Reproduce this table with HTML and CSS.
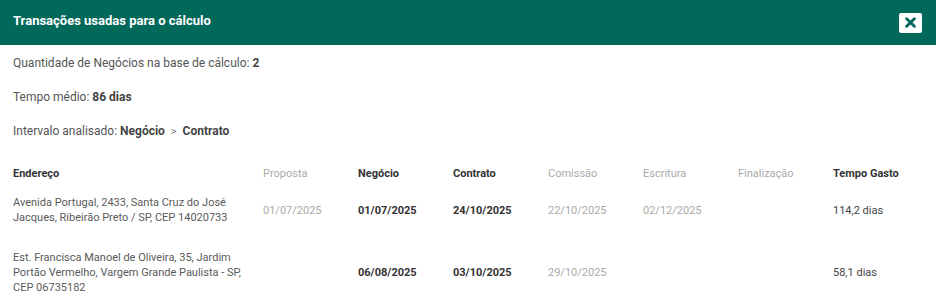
FILE: index.html
```html
<!DOCTYPE html>
<html lang="pt-BR">
<head>
<meta charset="utf-8">
<link rel="stylesheet" href="styles.css">
</head>
<body>
<div class="modal">
  <header class="modal-header">
    <h1 class="modal-title">Transações usadas para o cálculo</h1>
    <button class="close-btn" aria-label="Fechar">
      <svg width="11" height="11" viewBox="0 0 10 10"><path d="M1.5 1.5 L8.5 8.5 M8.5 1.5 L1.5 8.5" stroke="#00695a" stroke-width="2.6" stroke-linecap="round"/></svg>
    </button>
  </header>
  <div class="modal-body">
    <p class="info">Quantidade de Negócios na base de cálculo: <b>2</b></p>
    <p class="info">Tempo médio: <b>86 dias</b></p>
    <p class="info">Intervalo analisado: <b>Negócio</b> <span class="arrow">&gt;</span> <b>Contrato</b></p>
    <table class="tx-table">
      <thead>
        <tr>
          <th class="addr">Endereço</th>
          <th class="muted">Proposta</th>
          <th>Negócio</th>
          <th>Contrato</th>
          <th class="muted">Comissão</th>
          <th class="muted">Escritura</th>
          <th class="muted">Finalização</th>
          <th>Tempo Gasto</th>
        </tr>
      </thead>
      <tbody>
        <tr>
          <td class="addr">Avenida Portugal, 2433, Santa Cruz do José Jacques, Ribeirão Preto / SP, CEP 14020733</td>
          <td class="muted">01/07/2025</td>
          <td class="strong">01/07/2025</td>
          <td class="strong">24/10/2025</td>
          <td class="muted">22/10/2025</td>
          <td class="muted">02/12/2025</td>
          <td class="muted"></td>
          <td class="plain">114,2 dias</td>
        </tr>
        <tr>
          <td class="addr">Est. Francisca Manoel de Oliveira, 35, Jardim Portão Vermelho, Vargem Grande Paulista - SP, CEP 06735182</td>
          <td class="muted"></td>
          <td class="strong">06/08/2025</td>
          <td class="strong">03/10/2025</td>
          <td class="muted">29/10/2025</td>
          <td class="muted"></td>
          <td class="muted"></td>
          <td class="plain">58,1 dias</td>
        </tr>
      </tbody>
    </table>
  </div>
</div>
</body>
</html>
```
FILE: styles.css
```css
* { box-sizing: border-box; }
html, body { margin: 0; padding: 0; background: #fff; }
body { font-family: Roboto, "Noto Sans", sans-serif; color: #555; font-size: 12px; }

.modal { width: 936px; }

.modal-header {
  height: 45px;
  background: #00695a;
  display: flex;
  align-items: center;
  justify-content: space-between;
  padding: 0 14px 0 13px;
}
.modal-title {
  margin: 0;
  color: #fff;
  font-size: 13px;
  font-weight: 700;
  letter-spacing: 0;
  margin-top: -4px;
}
.close-btn {
  width: 23px;
  height: 20px;
  border: 0;
  border-radius: 2px;
  background: #fff;
  display: flex;
  align-items: center;
  justify-content: center;
  padding: 0;
  margin-top: 0;
}

.modal-body { padding: 11px 13px 0 13px; }

.info {
  margin: 0 0 20px 0;
  line-height: 14px;
  color: #555;
}
.info b { color: #444; font-weight: 700; }
.arrow { color: #777; margin: 0 3px; font-size: 11px; }

.tx-table {
  border-collapse: collapse;
  margin-top: 28px;
  table-layout: fixed;
  width: 910px;
}
.tx-table th, .tx-table td {
  padding: 0;
  text-align: left;
  vertical-align: middle;
  font-size: 11px;
}
.tx-table th {
  font-weight: 700;
  color: #333;
  height: 16px;
  padding-bottom: 15px;
}
.tx-table th.muted { font-weight: 400; color: #aaa; }
.tx-table th.addr { width: 250px; }
.tx-table th:not(.addr) { width: 95px; }
.tx-table td { line-height: 15px; padding-bottom: 25px; }
.tx-table td.addr { color: #5a5a5a; padding-right: 10px; }
.tx-table td.muted { color: #aaa; }
.tx-table td.strong { color: #333; font-weight: 700; }
.tx-table td.plain { color: #444; }
```
